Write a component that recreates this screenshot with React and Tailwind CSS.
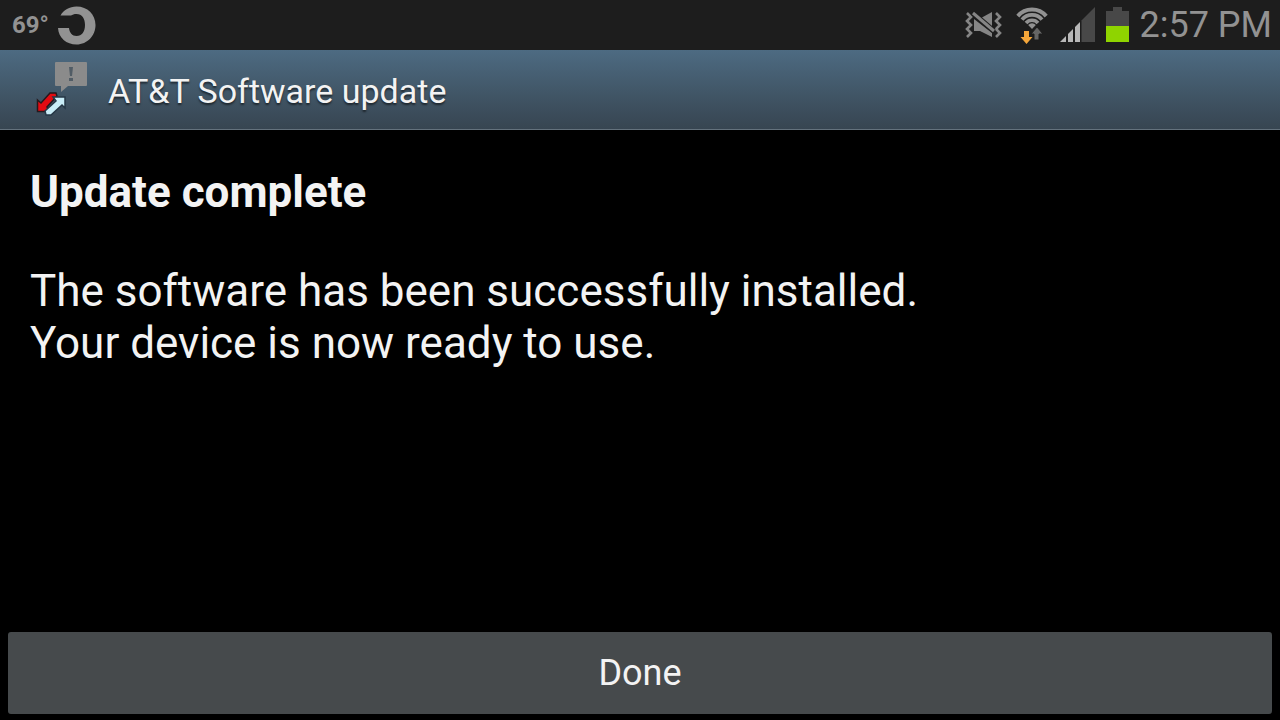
function CarrierIcon() {
    return (
        <svg className="h-[40px] w-[40px]" viewBox="0 0 40 40" aria-hidden="true">
            <path
                d="M3.5 10.6 C6.5 5 12.5 1.5 19.5 1.5 C30.5 1.5 38.5 9.5 38.5 20 S30.5 39.5 19.5 39.5 C9.5 39.5 1.5 33 1 23 H12 C12.5 27.5 15 31 19.5 31 C25 31 28 26.5 28 20 S25 9 19.5 9 C17 9 15.5 9.5 14 10.6 Z"
                fill="#929292"
            />
        </svg>
    );
}

function VibrateMuteIcon() {
    return (
        <svg className="h-[28px] w-[38px]" viewBox="0 0 38 28" aria-hidden="true">
            <g fill="none" stroke="#858585" strokeWidth="2.6">
                <path d="M3 2 L7 6 L3 10 L7 14 L3 18 L7 22 L3 26" />
                <path d="M32 2 L36 6 L32 10 L36 14 L32 18 L36 22 L32 26" />
            </g>
            <path d="M10 8 L28 22 V26 L16 20 H10 Z" fill="#858585" />
            <path d="M17 7 L28 1 V17 Z" fill="#858585" />
            <path d="M9 2 L30 20" stroke="#1d1d1d" strokeWidth="5" />
            <path d="M9 2 L30 20" stroke="#858585" strokeWidth="3" />
        </svg>
    );
}

function WifiIcon() {
    return (
        <svg className="h-[40px] w-[34px]" viewBox="0 0 34 40" aria-hidden="true">
            <g fill="none" stroke="#929292">
                <path d="M3.8 11.1 A18.5 18.5 0 0 1 32.2 11.1" strokeWidth="4" />
                <path d="M8 14.6 A13 13 0 0 1 28 14.6" strokeWidth="3.8" />
                <path d="M12 18 A7.8 7.8 0 0 1 24 18" strokeWidth="3.6" />
            </g>
            <path d="M14.2 20 A5 5 0 0 1 21.8 20 L18 24 Z" fill="#929292" />
            <path d="M23 22 L29 29 H25 V35 H20 V29 H17 Z" fill="#666" stroke="#1d1d1d" strokeWidth="1" />
            <path d="M10 26 H15 V32 H18.5 L12.5 39 L6.5 32 H10 Z" fill="#f5a63a" />
        </svg>
    );
}

function SignalIcon() {
    return (
        <svg className="h-[36px] w-[36px]" viewBox="0 0 36 36" aria-hidden="true">
            <path d="M21.5 13.5 L35 0 V35 H21.5 Z" fill="#484848" />
            <path d="M0 35 L6 29 V35 Z" fill="#b8b8b8" />
            <path d="M8 27 L13 22 V35 H8 Z" fill="#b8b8b8" />
            <path d="M15 20 L20 15 V35 H15 Z" fill="#b8b8b8" />
        </svg>
    );
}

function BatteryIcon() {
    return (
        <svg className="h-[36px] w-[24px]" viewBox="0 0 24 36" aria-hidden="true">
            <path d="M0 4 H7 V0 H16 V4 H23 V19 H0 Z" fill="#484848" />
            <rect x="0" y="19" width="23" height="16" fill="#8fd400" />
        </svg>
    );
}

function UpdateIcon() {
    return (
        <svg className="h-[56px] w-[52px] shrink-0" viewBox="0 0 52 56" aria-hidden="true">
            <path d="M20 0 H50 Q51 0 51 1 V23 Q51 24 50 24 H32 L25 30 V24 H20 Q19 24 19 23 V1 Q19 0 20 0 Z" fill="#8b8b8b" />
            <path d="M33 5 H37 L36 14 H34 Z" fill="#515c65" />
            <rect x="33" y="16" width="4" height="3" fill="#515c65" />
            <path d="M1.5 38 L5 41 L14 31 H20 L21 34 L11 45 L13 49.5 H1.5 Z" fill="#e30b12" stroke="#26191d" strokeWidth="1.5" />
            <path d="M17 35 H29 V46 L26 43 L15 53 H10 L9 49 L20 39 Z" fill="#c9edf7" stroke="#263746" strokeWidth="1.5" />
        </svg>
    );
}

export default function App() {
    return (
        <div className="flex min-h-screen flex-col bg-black font-['Roboto',sans-serif] text-[#f3f3f3]">
            <div className="flex h-[50px] items-center justify-between bg-[#1d1d1d] pr-2 pl-3 text-[#929292]">
                <div className="flex items-center gap-2">
                    <span className="text-[24px] leading-8 font-bold">69°</span>
                    <CarrierIcon />
                </div>
                <div className="flex items-center gap-[10px]">
                    <div className="flex items-center gap-3">
                        <VibrateMuteIcon />
                        <WifiIcon />
                        <SignalIcon />
                    </div>
                    <BatteryIcon />
                    <time className="text-[36px] leading-10">2:57 PM</time>
                </div>
            </div>

            <header className="flex h-[80px] items-center gap-5 border-b border-[#64727d] bg-linear-to-b from-[#4d6b82] to-[#374551] px-9">
                <UpdateIcon />
                <h1 className="pt-[2px] text-[34px] leading-10 [text-shadow:0_2px_2px_#0008]">AT&amp;T Software update</h1>
            </header>

            <main className="flex-1 px-[30px] pt-9">
                <h2 className="text-[44px] leading-[52px] font-bold">Update complete</h2>
                <p className="mt-[47px] text-[44px] leading-[52px]">
                    The software has been successfully installed.
                    <br />
                    Your device is now ready to use.
                </p>
            </main>

            <footer className="px-2 pb-[6px]">
                <button type="button" className="h-[82px] w-full rounded-[3px] bg-[#464a4c] text-[36px] leading-10">
                    Done
                </button>
            </footer>
        </div>
    );
}
